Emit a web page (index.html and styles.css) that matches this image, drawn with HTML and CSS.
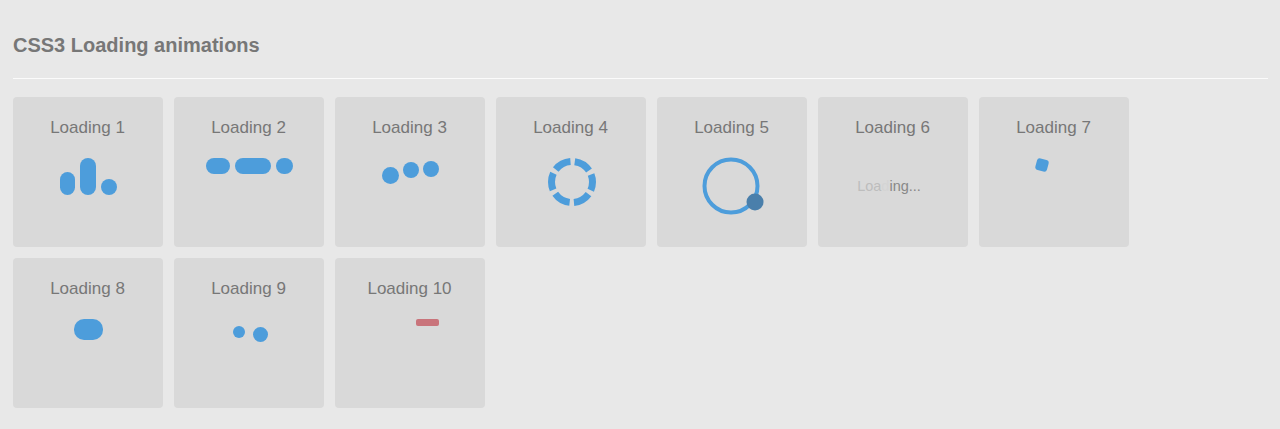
FILE: index.html
```html
<!DOCTYPE html>
<html lang="en">
<head>
    <meta charset="UTF-8">
    <meta name="viewport" content="width=device-width, initial-scale=1.0">
    <title>CSS3 Loading animations</title>
    <link rel="stylesheet" href="styles.css">
</head>
<body>
    <div class="page">
        <h1>CSS3 Loading animations</h1>
        <hr>

        <div class="grid">
            <div class="card">
                <p class="label">Loading 1</p>
                <div class="stage">
                    <div class="load1"><span></span><span></span><span></span></div>
                </div>
            </div>

            <div class="card">
                <p class="label">Loading 2</p>
                <div class="stage">
                    <div class="load2"><span></span><span></span><span></span></div>
                </div>
            </div>

            <div class="card">
                <p class="label">Loading 3</p>
                <div class="stage">
                    <div class="load3"><span></span><span></span><span></span></div>
                </div>
            </div>

            <div class="card">
                <p class="label">Loading 4</p>
                <div class="stage">
                    <svg class="load4" width="48" height="48" viewBox="0 0 48 48">
                        <circle cx="24" cy="24" r="20.5" fill="none" stroke="#4d9ddb" stroke-width="7"
                                stroke-dasharray="17 4.47" stroke-dashoffset="8.5"/>
                    </svg>
                </div>
            </div>

            <div class="card">
                <p class="label">Loading 5</p>
                <div class="stage">
                    <svg class="load5" width="70" height="70" viewBox="0 0 70 70">
                        <circle cx="34" cy="35" r="26.5" fill="none" stroke="#4d9ddb" stroke-width="4"/>
                        <circle cx="58" cy="51" r="8.5" fill="#4a7fab"/>
                    </svg>
                </div>
            </div>

            <div class="card">
                <p class="label">Loading 6</p>
                <div class="stage">
                    <div class="load6"><span class="dim">Loa</span><span class="gone">d</span>ing...</div>
                </div>
            </div>

            <div class="card">
                <p class="label">Loading 7</p>
                <div class="stage">
                    <div class="load7"></div>
                </div>
            </div>

            <div class="card">
                <p class="label">Loading 8</p>
                <div class="stage">
                    <div class="load8"></div>
                </div>
            </div>

            <div class="card">
                <p class="label">Loading 9</p>
                <div class="stage">
                    <div class="load9"><span></span><span></span></div>
                </div>
            </div>

            <div class="card">
                <p class="label">Loading 10</p>
                <div class="stage">
                    <div class="load10"></div>
                </div>
            </div>
        </div>
    </div>
</body>
</html>
```

FILE: styles.css
```css
body {
    margin: 0;
    background: #e8e8e8;
    font-family: "Liberation Sans", Arial, sans-serif;
    color: #777;
}
.page {
    padding: 0 12px 0 13px;
}
h1 {
    margin: 33px 0 0;
    font-size: 20px;
    line-height: 24px;
    font-weight: bold;
    color: #777;
}
hr {
    border: none;
    height: 1px;
    background: #fbfbfb;
    margin: 21px 0 18px;
}
.grid {
    display: flex;
    flex-wrap: wrap;
    gap: 11px;
}
.card {
    width: 150px;
    height: 150px;
    background: #d9d9d9;
    border-radius: 4px;
    padding-top: 21px;
    box-sizing: border-box;
}
.label {
    margin: 0 0 0 -1px;
    font-size: 17px;
    line-height: 20px;
    text-align: center;
}
.stage {
    display: flex;
    justify-content: center;
    align-items: flex-start;
    height: 89px;
}

/* 1: bars */
.load1 {
    display: flex;
    align-items: flex-end;
    gap: 5px;
    height: 57px;
}
.load1 span {
    width: 16px;
    border-radius: 8px;
    background: #4d9ddb;
}
.load1 span:nth-child(1) { width: 15px; height: 23px; }
.load1 span:nth-child(2) { height: 37px; }
.load1 span:nth-child(3) { height: 16px; }

/* 2: pills */
.load2 {
    display: flex;
    gap: 5px;
    margin-top: 20px;
}
.load2 span {
    height: 16px;
    border-radius: 8px;
    background: #4d9ddb;
}
.load2 span:nth-child(1) { width: 24px; }
.load2 span:nth-child(2) { width: 36px; }
.load2 span:nth-child(3) { width: 17px; }

/* 3: bouncing dots */
.load3 {
    display: flex;
    gap: 4px;
}
.load3 span {
    width: 16px;
    height: 16px;
    border-radius: 50%;
    background: #4d9ddb;
}
.load3 span:nth-child(1) { width: 17px; height: 17px; margin-top: 29px; }
.load3 span:nth-child(2) { margin-top: 24px; }
.load3 span:nth-child(3) { margin-top: 23px; }

/* 4: dashed ring */
.load4 {
    margin-top: 20px;
    margin-left: 2px;
}

/* 5: orbit */
.load5 {
    margin-top: 13px;
}

/* 6: fading letters */
.load6 {
    margin-top: 40px;
    margin-right: 8px;
    font-size: 14.5px;
    line-height: 16px;
    color: #888;
}
.load6 .dim { color: #bdbdbd; }
.load6 .gone { color: #d4d4d4; }

/* 7: spinning square */
.load7 {
    width: 12px;
    height: 12px;
    margin-top: 21px;
    margin-right: 25px;
    border-radius: 3px;
    background: #4d9ddb;
    transform: rotate(15deg);
}

/* 8: pill */
.load8 {
    width: 29px;
    height: 21px;
    margin-top: 20px;
    border-radius: 10px;
    background: #4d9ddb;
}

/* 9: two dots */
.load9 {
    display: flex;
    gap: 8px;
    margin-left: 3px;
}
.load9 span {
    border-radius: 50%;
    background: #4d9ddb;
}
.load9 span:nth-child(1) { width: 12px; height: 12px; margin-top: 27px; }
.load9 span:nth-child(2) { width: 15px; height: 15px; margin-top: 28px; }

/* 10: red bar */
.load10 {
    width: 23px;
    height: 7px;
    margin-top: 20px;
    margin-left: 35px;
    border-radius: 2px;
    background: #c9747b;
}
```
